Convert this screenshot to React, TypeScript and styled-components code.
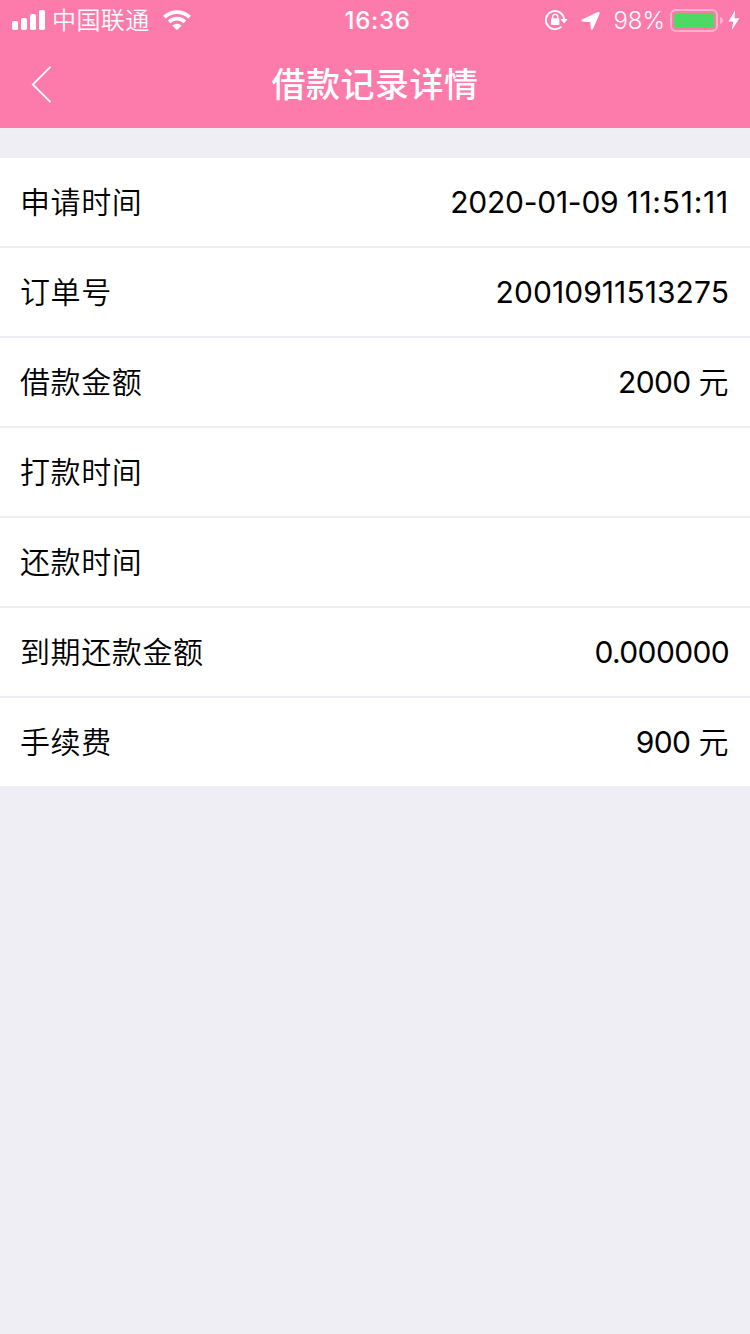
import React from "react";
import styled, { createGlobalStyle } from "styled-components";

const GlobalStyle = createGlobalStyle`
  * { box-sizing: border-box; }
  body {
    margin: 0;
    background: #efeef4;
    color: #000;
    font-family: Inter, "Noto Sans CJK SC", sans-serif;
  }
  svg { display: block; flex: none; }
`;

const Screen = styled.main`
  min-height: 1334px;
  background: #efeef4;
`;

const Header = styled.header`
  height: 128px;
  background: #fd7baa;
  color: #fff;
`;

const StatusBar = styled.div`
  display: grid;
  grid-template-columns: 1fr auto 1fr;
  grid-template-rows: 40px;
  height: 40px;
  padding: 0 10px 0 12px;
  line-height: 42px;
`;

const StatusGroup = styled.div<{ $end?: boolean }>`
  display: flex;
  height: 40px;
  justify-content: ${(p) => (p.$end ? "flex-end" : "flex-start")};
`;

const IconPair = styled.div<{ $gap: number }>`
  display: flex;
  gap: ${(p) => p.$gap}px;
`;

const Carrier = styled.span`
  height: 40px;
  margin: 0 13px 0 7px;
  font-size: 24px;
  font-weight: 350;
  letter-spacing: 0.4px;
`;

const Clock = styled.time`
  height: 40px;
  padding-left: 3px;
  font-size: 24px;
  font-weight: 550;
  letter-spacing: 0.7px;
`;

const Percent = styled.span`
  height: 40px;
  margin: 0 5px 0 12px;
  font-size: 24px;
  font-weight: 350;
`;

const NavBar = styled.nav`
  display: grid;
  grid-template-columns: 80px 1fr 80px;
  grid-template-rows: 88px;
`;

const BackButton = styled.button`
  height: 88px;
  padding: 2px 0 0 30px;
  border: 0;
  background: none;
  color: inherit;
`;

const Title = styled.h1`
  height: 88px;
  margin: 0;
  font-size: 34px;
  font-weight: 500;
  line-height: 90px;
  letter-spacing: 0.5px;
  text-align: center;
`;

const List = styled.dl`
  display: grid;
  gap: 2px;
  margin: 30px 0 0;
`;

const Row = styled.div`
  display: flex;
  justify-content: space-between;
  height: 88px;
  padding: 0 21px 0 20px;
  background: #fff;
  font-size: 30px;
  line-height: 89px;
`;

const Label = styled.dt`
  font-weight: 350;
  letter-spacing: 0.6px;
`;

const Value = styled.dd`
  display: flex;
  gap: 8px;
  margin: 0;
`;

const Figure = styled.span<{ $tracking: number }>`
  line-height: 88px;
  letter-spacing: ${(p) => p.$tracking}px;
`;

const Unit = styled.span`
  font-weight: 350;
  letter-spacing: 0.6px;
`;

type Part = { text: string; tracking: number };
type RecordItem = { label: string; parts: Part[]; unit?: string };

const records: RecordItem[] = [
  {
    label: "申请时间",
    parts: [
      { text: "2020-01-09", tracking: -0.25 },
      { text: "11:51:11", tracking: 0.75 },
    ],
  },
  { label: "订单号", parts: [{ text: "20010911513275", tracking: 0.07 }] },
  { label: "借款金额", parts: [{ text: "2000", tracking: -0.7 }], unit: "元" },
  { label: "打款时间", parts: [] },
  { label: "还款时间", parts: [] },
  { label: "到期还款金额", parts: [{ text: "0.000000", tracking: -0.65 }] },
  { label: "手续费", parts: [{ text: "900", tracking: -0.6 }], unit: "元" },
];

const SignalIcon = () => (
  <svg width="33" height="40" viewBox="12 0 33 40" fill="#fff">
    <rect x="12" y="21" width="6" height="9" rx="1.8" />
    <rect x="21" y="18" width="6" height="12" rx="1.8" />
    <rect x="30" y="14" width="6" height="16" rx="1.8" />
    <rect x="39" y="10" width="6" height="20" rx="1.8" />
  </svg>
);

const WifiIcon = () => (
  <svg width="28" height="40" viewBox="163 0 28 40">
    <g fill="none" stroke="#fff">
      <path d="M164.4 17.2 A18.2 18.2 0 0 1 189.6 17.2" strokeWidth="3.9" />
      <path d="M169.1 21.8 A11.4 11.4 0 0 1 184.9 21.8" strokeWidth="3.7" />
    </g>
    <path d="M172.4 25.4 Q177 21.9 181.6 25.4 L177.7 29.5 Q177 30.2 176.3 29.5 Z" fill="#fff" />
  </svg>
);

const RotationLockIcon = () => (
  <svg width="24" height="40" viewBox="544 0 24 40">
    <path d="M561.4 26.6 A9.1 9.1 0 1 1 564.1 19.5" fill="none" stroke="#fff" strokeWidth="1.9" />
    <path d="M560.4 19.1 H567.7 L564.1 23.6 Z" fill="#fff" />
    <rect x="551" y="18.2" width="8.4" height="6.9" rx="0.8" fill="#fff" />
    <path d="M552.6 19 V17 A2.6 2.6 0 0 1 557.8 17 V19" fill="none" stroke="#fff" strokeWidth="1.4" />
  </svg>
);

const LocationIcon = () => (
  <svg width="20" height="40" viewBox="581 0 20 40" fill="#fff">
    <path d="M597.8 12.1 Q600.2 11.5 599.5 13.9 L593 28.9 Q591.6 30.6 590.8 28.8 L590.4 22.2 L582.8 21.6 Q580.1 20.7 582 19.4 Z" />
  </svg>
);

const BatteryIcon = () => (
  <svg width="54" height="40" viewBox="670 0 54 40">
    <rect x="671" y="10" width="46" height="21" rx="5" fill="none" stroke="#fff" strokeOpacity="0.42" strokeWidth="2" />
    <rect x="674" y="13" width="40" height="15" rx="1.5" fill="#4cd964" />
    <path d="M720 17 Q723 18 723 20.5 Q723 23 720 24 Z" fill="#fff" fillOpacity="0.42" />
  </svg>
);

const BoltIcon = () => (
  <svg width="12" height="40" viewBox="728.5 0 12 40" fill="#fff">
    <path d="M735.6 10.2 L729 21.4 H733.8 L732.3 29.9 L740 18.2 H735 Z" />
  </svg>
);

const BackIcon = () => (
  <svg width="22" height="40" viewBox="30 65 22 40" fill="none" stroke="#fff" strokeWidth="1.8">
    <path d="M50.5 66.8 L32.8 84.5 L50.5 102.2" />
  </svg>
);

export default function App() {
  return (
    <Screen>
      <GlobalStyle />
      <Header>
        <StatusBar>
          <StatusGroup>
            <SignalIcon />
            <Carrier>中国联通</Carrier>
            <WifiIcon />
          </StatusGroup>
          <Clock>16:36</Clock>
          <StatusGroup $end>
            <IconPair $gap={13}>
              <RotationLockIcon />
              <LocationIcon />
            </IconPair>
            <Percent>98%</Percent>
            <IconPair $gap={4}>
              <BatteryIcon />
              <BoltIcon />
            </IconPair>
          </StatusGroup>
        </StatusBar>
        <NavBar>
          <BackButton aria-label="返回">
            <BackIcon />
          </BackButton>
          <Title>借款记录详情</Title>
        </NavBar>
      </Header>
      <List>
        {records.map((r) => (
          <Row key={r.label}>
            <Label>{r.label}</Label>
            <Value>
              {r.parts.map((p) => (
                <Figure key={p.text} $tracking={p.tracking}>
                  {p.text}
                </Figure>
              ))}
              {r.unit && <Unit>{r.unit}</Unit>}
            </Value>
          </Row>
        ))}
      </List>
    </Screen>
  );
}
